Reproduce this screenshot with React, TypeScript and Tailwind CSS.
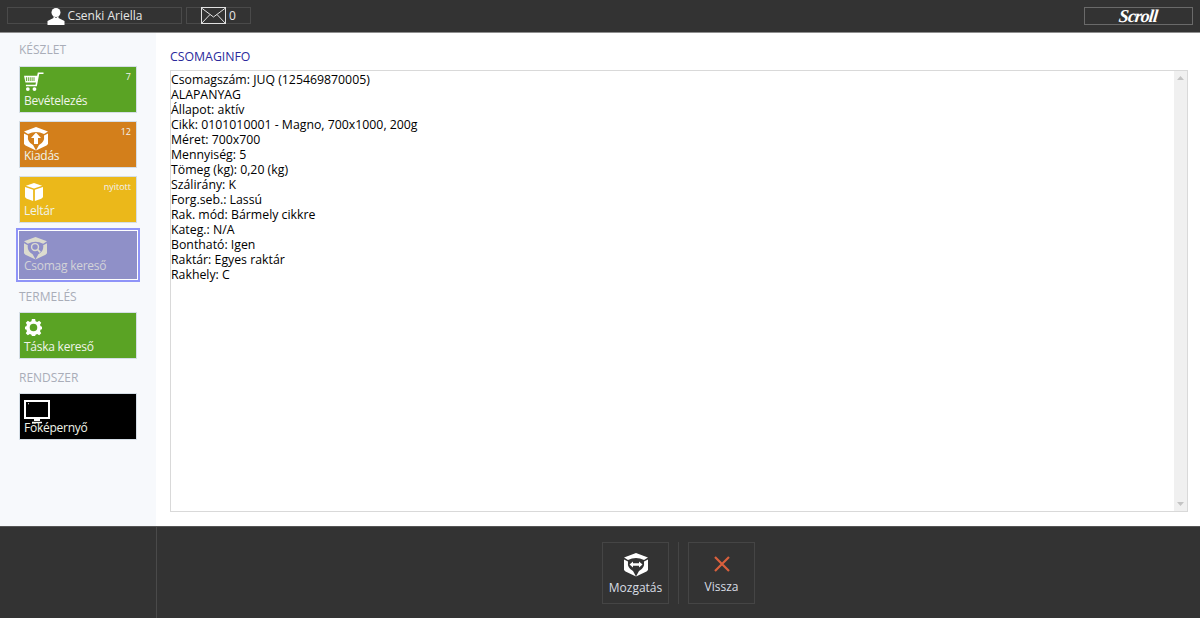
import { ReactElement, ReactNode } from 'react';

const lines = [
  'Csomagszám: JUQ (125469870005)',
  'ALAPANYAG',
  'Állapot: aktív',
  'Cikk: 0101010001 - Magno, 700x1000, 200g',
  'Méret: 700x700',
  'Mennyiség: 5',
  'Tömeg (kg): 0,20 (kg)',
  'Szálirány: K',
  'Forg.seb.: Lassú',
  'Rak. mód: Bármely cikkre',
  'Kateg.: N/A',
  'Bontható: Igen',
  'Raktár: Egyes raktár',
  'Rakhely: C',
];

const BoxShell = ({ children, size = 24, color = 'white' }: { children: ReactNode; size?: number; color?: string }) => (
  <svg width={size} height={size} viewBox="0 0 24 24" fill={color}>
    <path d="M12 0 L24 4.5 L20 7 Q12 3 4 7 L0 4.5 Z" />
    <path d="M0 6.5 L4 8.5 Q3 15 9 18 L12 23.5 L1.5 18.5 L0 17 Z" />
    <path d="M24 6.5 L20 8.5 Q21 15 15 18 L12 23.5 L22.5 18.5 L24 17 Z" />
    {children}
  </svg>
);

const Cart = () => (
  <svg width="20" height="19" viewBox="0 0 21 20" fill="white">
    <path d="M14.5 0.5 H20.5 V2 H16 L13.5 15 H2 V13.5 H12 L12.6 11 H1.5 L0 4 H13.8 Z" />
    <rect x="2" y="5.5" width="1" height="4" fill="#5aa324" />
    <rect x="4" y="5.5" width="1" height="4" fill="#5aa324" />
    <rect x="6" y="5.5" width="1" height="4" fill="#5aa324" />
    <rect x="8" y="5.5" width="1" height="4" fill="#5aa324" />
    <rect x="10" y="5.5" width="1" height="4" fill="#5aa324" />
    <circle cx="4" cy="18" r="2" />
    <circle cx="11" cy="18" r="2" />
  </svg>
);

const Cube = () => (
  <svg width="18" height="18" viewBox="0 0 20 20" fill="white">
    <path d="M10 0 L19 3 L10 6 L1 3 Z" />
    <path d="M0 4.5 L9 7.5 V20 L2 17.5 Q0 16.5 0 15 Z" />
    <path d="M20 4.5 L11 7.5 V20 L18 17.5 Q20 16.5 20 15 Z" />
  </svg>
);

const Gear = () => (
  <svg width="17" height="17" viewBox="0 0 18 18" fill="white" fillRule="evenodd">
    <path d="M7.3 0 H10.7 L11.2 2.4 L12.9 3.1 L15 1.8 L17.2 4 L15.9 6.1 L16.6 7.8 L18 8.2 V10.8 L16.6 11.2 L15.9 12.9 L17.2 15 L15 17.2 L12.9 15.9 L11.2 16.6 L10.7 18 H7.3 L6.8 16.6 L5.1 15.9 L3 17.2 L0.8 15 L2.1 12.9 L1.4 11.2 L0 10.8 V8.2 L1.4 7.8 L2.1 6.1 L0.8 4 L3 1.8 L5.1 3.1 L6.8 2.4 Z M9 5 A4 4 0 1 0 9 13 A4 4 0 1 0 9 5 Z" />
  </svg>
);

const Monitor = () => (
  <svg width="26" height="25" viewBox="0 0 26 25" fill="none" stroke="white">
    <rect x="1" y="1" width="24" height="17" strokeWidth="2" />
    <path d="M4 4 L5 3.5" strokeWidth="1" />
    <path d="M10 20 H16" strokeWidth="2" />
    <path d="M8 22.5 H18" strokeWidth="1.5" />
  </svg>
);

const Tile = ({ label, badge, icon, color, iconBox }: { label: string; badge?: string; icon: ReactNode; color: string; iconBox: string }) => (
  <div className={`relative h-[47px] w-[118px] border border-[#d5dee6] px-[4px] ${color}`}>
    <div className={iconBox}>{icon}</div>
    {badge && <span className="absolute right-[5px] top-[4px] text-[9px] leading-3 text-[#f2f2f2]">{badge}</span>}
    <span className="absolute bottom-[2px] left-[4px] text-[12px] leading-[18px] tracking-[-0.25px] text-[#f0f4ea]">{label}</span>
  </div>
);

const SectionLabel = ({ children, className }: { children: ReactNode; className: string }) => (
  <div className={`pl-[19px] text-[12px] leading-[18px] text-[#a9adb8] ${className}`}>{children}</div>
);

const App = (): ReactElement => {
  return (
    <div className="flex h-[618px] w-[1200px] flex-col overflow-hidden bg-white font-['Open_Sans','Noto_Sans',sans-serif]">
      <header className="flex h-[33px] items-center border-b border-[#8f8f8f] bg-[#333333] pb-[1px]">
        <div className="ml-[7px] flex h-[17px] w-[175px] items-center justify-center gap-[3px] border border-[#4a4a4a]">
          <svg width="18" height="18" viewBox="0 0 18 18" fill="white">
            <circle cx="9" cy="5.5" r="4.5" />
            <path d="M6.5 9 L9 11 L11.5 9 L11.5 11 L17.5 14 V18 H0.5 V14 L6.5 11 Z" />
          </svg>
          <span className="text-[12px] text-[#e6e6e6]">Csenki Ariella</span>
        </div>
        <div className="ml-[4px] flex h-[17px] w-[65px] items-center justify-center gap-[3px] border border-[#4a4a4a]">
          <svg width="25" height="17" viewBox="0 0 25 17" fill="none" stroke="#e0e0e0">
            <rect x="0.5" y="0.5" width="24" height="16" />
            <path d="M0.5 1 L12.5 10 L24.5 1 M0.5 16.5 L9 7.5 M24.5 16.5 L16 7.5" />
          </svg>
          <span className="text-[12px] text-[#e6e6e6]">0</span>
        </div>
        <div className="ml-auto mr-[7px] flex h-[18px] w-[109px] items-center justify-center border border-[#6a6a6a]">
          <span className="font-['Liberation_Serif',serif] -skew-x-6 text-[18px] font-bold italic leading-none tracking-[-1px] text-white">Scroll</span>
        </div>
      </header>

      <div className="flex min-h-0 flex-1">
        <aside className="w-[156px] shrink-0 bg-[#f7f9fc]">
          <SectionLabel className="mt-[8px]">KÉSZLET</SectionLabel>
          <div className="ml-[19px] mt-[7px] flex flex-col gap-[8px]">
            <Tile label="Bevételezés" badge="7" color="bg-[#5aa324]" iconBox="pt-[5px]" icon={<Cart />} />
            <Tile label="Kiadás" badge="12" color="bg-[#d37f1b]" iconBox="pt-[5px]" icon={<BoxShell><path d="M12 5.5 L17 11 H14 V17 H10 V11 H7 Z" /></BoxShell>} />
            <Tile label="Leltár" badge="nyitott" color="bg-[#ebb81a]" iconBox="pl-[1px] pt-[6px]" icon={<Cube />} />
          </div>
          <div className="ml-[16px] mt-[5px] h-[54px] w-[124px] border-2 border-[#8f94f8] bg-white p-[1px]">
            <div className="relative h-full bg-[#8f90c8] px-[5px]">
              <div className="pt-[6px]">
                <BoxShell size={23} color="#dcdccf">
                  <circle cx="11.5" cy="10.5" r="3.6" fill="none" stroke="#dcdccf" strokeWidth="1.5" />
                  <path d="M14 13 L17 16" stroke="#dcdccf" strokeWidth="1.8" />
                </BoxShell>
              </div>
              <span className="absolute bottom-[4px] left-[5px] text-[12px] leading-[18px] tracking-[-0.25px] text-[#d3d3d8]">Csomag kereső</span>
            </div>
          </div>
          <SectionLabel className="mt-[6px]">TERMELÉS</SectionLabel>
          <div className="ml-[19px] mt-[6px]">
            <Tile label="Táska kereső" color="bg-[#5aa324]" iconBox="pl-[1px] pt-[6px]" icon={<Gear />} />
          </div>
          <SectionLabel className="mt-[10px]">RENDSZER</SectionLabel>
          <div className="ml-[19px] mt-[6px]">
            <Tile label="Főképernyő" color="bg-black" iconBox="pt-[6px]" icon={<Monitor />} />
          </div>
        </aside>

        <main className="flex-1 pl-[14px] pr-[12px] pt-[15px]">
          <h1 className="text-[12.3px] leading-[18px] text-[#2a2a9c]">CSOMAGINFO</h1>
          <div className="mt-[4px] flex h-[442px] border border-[#d9d9d9]">
            <div className="flex-1 pt-[1px] text-[12.3px] leading-[15px] text-black">
              {lines.map((line) => (
                <div key={line}>{line}</div>
              ))}
            </div>
            <div className="flex w-[13px] flex-col items-center justify-between bg-[#f0f0f0] py-[5px]">
              <svg width="7" height="4" viewBox="0 0 7 4" fill="#c4c4c4"><path d="M3.5 0 L7 4 H0 Z" /></svg>
              <svg width="7" height="4" viewBox="0 0 7 4" fill="#c4c4c4"><path d="M0 0 H7 L3.5 4 Z" /></svg>
            </div>
          </div>
        </main>
      </div>

      <footer className="flex h-[92px] shrink-0 border-t border-[#555555] bg-[#333333]">
        <div className="w-[157px] shrink-0 border-r border-[#4a4a4a]" />
        <div className="flex flex-1 items-start justify-center pt-[15px]">
          <div className="flex h-[62px] w-[67px] flex-col items-center border border-[#454545] pt-[10px]">
            <BoxShell size={24}>
              <path d="M5.5 11.5 L9 8.5 V10.2 H15 V8.5 L18.5 11.5 L15 14.5 V12.8 H9 V14.5 Z" />
            </BoxShell>
            <span className="mt-[2px] text-[12px] leading-[18px] text-[#d8dde4]">Mozgatás</span>
          </div>
          <div className="mx-[9px] h-[62px] w-px bg-[#454545]" />
          <div className="flex h-[62px] w-[67px] flex-col items-center border border-[#454545] pt-[13px]">
            <svg width="16" height="16" viewBox="0 0 16 16" stroke="#d9603d" strokeWidth="2.2" fill="none">
              <path d="M1 1 L15 15 M15 1 L1 15" />
            </svg>
            <span className="mt-[6px] text-[12px] leading-[18px] text-[#d8dde4]">Vissza</span>
          </div>
        </div>
      </footer>
    </div>
  );
};

export default App;
